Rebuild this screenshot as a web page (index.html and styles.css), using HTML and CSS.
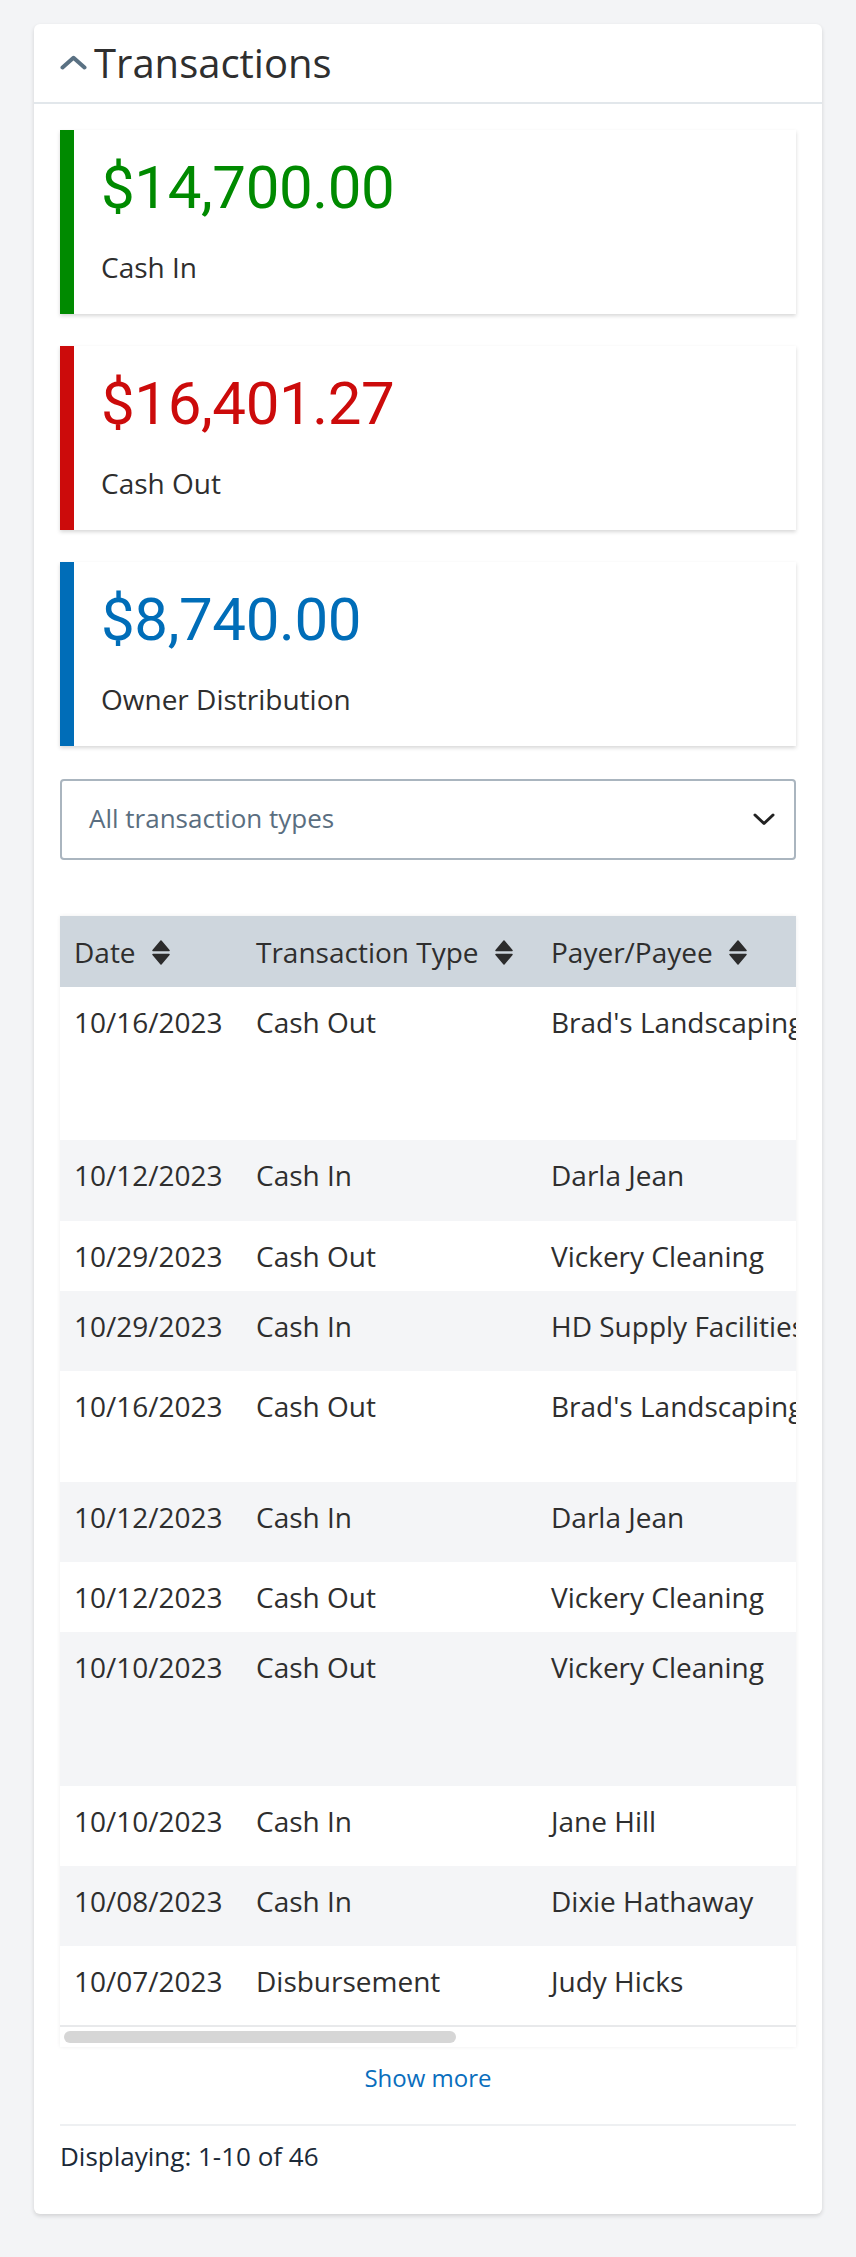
FILE: index.html
```html
<!DOCTYPE html>
<html lang="en">
<head>
<meta charset="utf-8">
<title>Transactions</title>
<link rel="stylesheet" href="styles.css">
</head>
<body>
<section class="panel">
  <header class="panel-header">
    <svg class="collapse-icon" width="27" height="15" viewBox="0 0 27 15" aria-hidden="true">
      <polyline points="2.5,12.5 13.5,2.8 24.5,12.5" fill="none" stroke="currentColor" stroke-width="4" stroke-linecap="round" stroke-linejoin="round"/>
    </svg>
    <h2 class="panel-title">Transactions</h2>
  </header>

  <div class="panel-body">
    <div class="stats">
      <div class="stat stat-in">
        <div class="stat-amount">$14,700.00</div>
        <div class="stat-label">Cash In</div>
      </div>
      <div class="stat stat-out">
        <div class="stat-amount">$16,401.27</div>
        <div class="stat-label">Cash Out</div>
      </div>
      <div class="stat stat-owner">
        <div class="stat-amount">$8,740.00</div>
        <div class="stat-label">Owner Distribution</div>
      </div>
    </div>

    <div class="select">
      <span class="select-value">All transaction types</span>
      <svg class="select-caret" width="22" height="13" viewBox="0 0 22 13" aria-hidden="true">
        <polyline points="2,2 11,10.5 20,2" fill="none" stroke="currentColor" stroke-width="3" stroke-linecap="round" stroke-linejoin="round"/>
      </svg>
    </div>

    <div class="table-wrap">
      <div class="table-scroll">
        <table class="tx-table">
          <colgroup>
            <col class="c-date"><col class="c-type"><col class="c-payee"><col class="c-amount"><col class="c-memo">
          </colgroup>
          <thead>
            <tr>
              <th><span class="th-inner">Date<svg class="sort" width="18" height="25" viewBox="0 0 18 25"><path d="M9 1 L17 10.5 H1 Z M1 14.5 H17 L9 24 Z" fill="currentColor" stroke="currentColor" stroke-width="1.5" stroke-linejoin="round"/></svg></span></th>
              <th><span class="th-inner">Transaction Type<svg class="sort" width="18" height="25" viewBox="0 0 18 25"><path d="M9 1 L17 10.5 H1 Z M1 14.5 H17 L9 24 Z" fill="currentColor" stroke="currentColor" stroke-width="1.5" stroke-linejoin="round"/></svg></span></th>
              <th><span class="th-inner">Payer/Payee<svg class="sort" width="18" height="25" viewBox="0 0 18 25"><path d="M9 1 L17 10.5 H1 Z M1 14.5 H17 L9 24 Z" fill="currentColor" stroke="currentColor" stroke-width="1.5" stroke-linejoin="round"/></svg></span></th>
              <th><span class="th-inner">Amount</span></th>
              <th><span class="th-inner">Memo</span></th>
            </tr>
          </thead>
          <tbody>
            <tr class="h153"><td>10/16/2023</td><td>Cash Out</td><td>Brad's Landscaping</td><td>$1,250.00</td><td>Monthly lawn care and seasonal cleanup</td></tr>
            <tr class="h81"><td>10/12/2023</td><td>Cash In</td><td>Darla Jean</td><td>$1,800.00</td><td>Rent payment</td></tr>
            <tr class="h70"><td>10/29/2023</td><td>Cash Out</td><td>Vickery Cleaning</td><td>$275.00</td><td>Cleaning</td></tr>
            <tr class="h80"><td>10/29/2023</td><td>Cash In</td><td>HD Supply Facilities</td><td>$120.00</td><td>Refund</td></tr>
            <tr class="h111"><td>10/16/2023</td><td>Cash Out</td><td>Brad's Landscaping</td><td>$1,250.00</td><td>Lawn care</td></tr>
            <tr class="h80"><td>10/12/2023</td><td>Cash In</td><td>Darla Jean</td><td>$1,800.00</td><td>Rent payment</td></tr>
            <tr class="h70"><td>10/12/2023</td><td>Cash Out</td><td>Vickery Cleaning</td><td>$275.00</td><td>Cleaning</td></tr>
            <tr class="h154"><td>10/10/2023</td><td>Cash Out</td><td>Vickery Cleaning</td><td>$310.00</td><td>Move-out deep clean</td></tr>
            <tr class="h80"><td>10/10/2023</td><td>Cash In</td><td>Jane Hill</td><td>$2,100.00</td><td>Rent payment</td></tr>
            <tr class="h80"><td>10/08/2023</td><td>Cash In</td><td>Dixie Hathaway</td><td>$1,950.00</td><td>Rent payment</td></tr>
            <tr class="h80"><td>10/07/2023</td><td>Disbursement</td><td>Judy Hicks</td><td>$8,740.00</td><td>Owner distribution</td></tr>
          </tbody>
        </table>
      </div>
      <div class="scrollbar" aria-hidden="true"><div class="scrollbar-thumb"></div></div>
    </div>

    <div class="show-more-row">
      <button class="show-more" type="button">Show more</button>
    </div>

    <div class="panel-footer">Displaying: 1-10 of 46</div>
  </div>
</section>
</body>
</html>
```

FILE: styles.css
```css
* { box-sizing: border-box; }

body {
  margin: 0;
  background: #f3f4f6;
  font-family: "Open Sans", "Noto Sans", sans-serif;
  color: #2e2e2e;
}

.panel {
  margin: 24px 34px 43px;
  background: #fff;
  border-radius: 6px;
  box-shadow: 0 2px 4px rgba(0, 0, 0, 0.14);
}

.panel-header {
  height: 80px;
  display: flex;
  align-items: center;
  padding: 0 26px;
  border-bottom: 2px solid #e2e7eb;
}

.collapse-icon {
  color: #5a7183;
  flex: none;
  margin-right: 7px;
  margin-top: -2px;
}

.panel-title {
  margin: 0;
  font-size: 40px;
  font-weight: 400;
  line-height: 54px;
  color: #2f2f2f;
}

.panel-body {
  padding: 26px 26px 40px;
}

.stats {
  display: flex;
  flex-direction: column;
  gap: 32px;
}

.stat {
  height: 184px;
  padding: 28px 27px 28px;
  background: #fff;
  border-left: 14px solid;
  box-shadow: 0 2px 4px rgba(0, 0, 0, 0.16);
}

.stat-in { border-left-color: #008a00; }
.stat-out { border-left-color: #cc0b0b; }
.stat-owner { border-left-color: #006db8; }

.stat-amount {
  font-family: Roboto, "Liberation Sans", sans-serif;
  font-size: 60px;
  line-height: 60px;
  letter-spacing: -0.4px;
  margin-bottom: 30px;
}

.stat-in .stat-amount { color: #008a00; }
.stat-out .stat-amount { color: #cc0b0b; }
.stat-owner .stat-amount { color: #006db8; }

.stat-label {
  font-size: 28px;
  line-height: 38px;
  color: #2e2e2e;
}

.select {
  margin-top: 33px;
  height: 81px;
  border: 2px solid #aab5bf;
  border-radius: 4px;
  display: flex;
  align-items: center;
  justify-content: space-between;
  padding: 0 19px 0 27px;
}

.select-value {
  font-size: 26px;
  line-height: 34px;
  margin-top: -3px;
  color: #5a6e80;
}

.select-caret {
  color: #222;
}

.table-wrap {
  margin-top: 56px;
  box-shadow: 0 0 4px rgba(0, 0, 0, 0.07);
}

.table-scroll {
  overflow-x: auto;
  scrollbar-width: none;
}

.table-scroll::-webkit-scrollbar {
  display: none;
}

.scrollbar {
  height: 20px;
  padding: 4px;
  background: #fff;
}

.scrollbar-thumb {
  width: 392px;
  height: 12px;
  border-radius: 6px;
  background: #d6d6d6;
}

.tx-table {
  width: 1354px;
  border-collapse: collapse;
  table-layout: fixed;
  font-size: 28px;
  line-height: 38px;
  color: #2e2e2e;
}

.c-date { width: 182px; }
.c-type { width: 295px; }
.c-payee { width: 300px; }
.c-amount { width: 220px; }
.c-memo { width: 357px; }

.tx-table th {
  background: #ced6dd;
  font-weight: 400;
  text-align: left;
  padding: 17px 14px 16px;
  white-space: nowrap;
}

.th-inner {
  display: inline-flex;
  align-items: center;
}

.sort {
  margin-left: 16px;
  color: #2c2c2c;
}

.tx-table td {
  padding: 16px 14px;
  vertical-align: top;
  white-space: nowrap;
  overflow: hidden;
}

.tx-table tbody tr:nth-child(even) { background: #f4f5f7; }
.tx-table tbody tr:last-child td { border-bottom: 2px solid #e8e9eb; }

.h70 { height: 70px; }
.h80 { height: 80px; }
.h81 { height: 81px; }
.h111 { height: 111px; }
.h153 { height: 153px; }
.h154 { height: 154px; }

.show-more-row {
  display: flex;
  justify-content: center;
  margin-top: 14px;
  padding-bottom: 30px;
  border-bottom: 2px solid #eef0f2;
}

.show-more {
  border: 0;
  background: none;
  padding: 0;
  font-family: "Open Sans", sans-serif;
  font-size: 24px;
  line-height: 33px;
  color: #0a6ebd;
  cursor: pointer;
}

.panel-footer {
  margin-top: 12px;
  font-size: 26px;
  line-height: 36px;
  color: #1b2a38;
}
```
